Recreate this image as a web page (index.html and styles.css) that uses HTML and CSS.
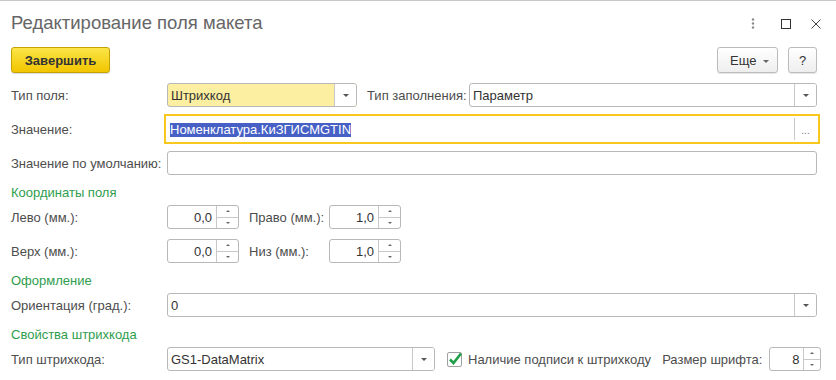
FILE: index.html
```html
<!doctype html>
<html>
<head>
<meta charset="utf-8">
<title>Редактирование поля макета</title>
<link rel="stylesheet" href="styles.css">
</head>
<body>
<div class="window">
  <div class="titlebar">
    <h1>Редактирование поля макета</h1>
    <div class="win-icons">
      <svg class="icon-more" width="4" height="11" viewBox="0 0 4 11"><circle cx="2" cy="1.5" r="1.2"/><circle cx="2" cy="5.5" r="1.2"/><circle cx="2" cy="9.5" r="1.2"/></svg>
      <svg class="icon-max" width="10" height="10" viewBox="0 0 10 10"><rect x="0.5" y="0.5" width="9" height="9"/></svg>
      <svg class="icon-close" width="10" height="10" viewBox="0 0 10 10"><path d="M0.5 0.5L9.5 9.5M9.5 0.5L0.5 9.5"/></svg>
    </div>
  </div>

  <div class="toolbar">
    <button class="btn-primary">Завершить</button>
    <div class="spacer"></div>
    <button class="btn btn-more">Еще <span class="tri"></span></button>
    <button class="btn btn-help">?</button>
  </div>

  <div class="form">
    <div class="row first">
      <div class="label">Тип поля:</div>
      <div class="field select w-type hl"><span class="text">Штрихкод</span><span class="drop"></span></div>
      <div class="label label-fill">Тип заполнения:</div>
      <div class="field select grow"><span class="text">Параметр</span><span class="drop"></span></div>
    </div>

    <div class="row">
      <div class="label">Значение:</div>
      <div class="focus-frame">
        <div class="field focused"><span class="text"><span class="sel">Номенклатура.КиЗГИСМGTIN</span></span><span class="dots">...</span></div>
      </div>
    </div>

    <div class="row">
      <div class="label">Значение по умолчанию:</div>
      <div class="field grow"><span class="text"></span></div>
    </div>

    <div class="heading">Координаты поля</div>

    <div class="row">
      <div class="label">Лево (мм.):</div>
      <div class="field spin"><span class="text">0,0</span><span class="arrows"><i class="up"></i><i class="down"></i></span></div>
      <div class="label label-pair">Право (мм.):</div>
      <div class="field spin"><span class="text">1,0</span><span class="arrows"><i class="up"></i><i class="down"></i></span></div>
    </div>

    <div class="row">
      <div class="label">Верх (мм.):</div>
      <div class="field spin"><span class="text">0,0</span><span class="arrows"><i class="up"></i><i class="down"></i></span></div>
      <div class="label label-pair">Низ (мм.):</div>
      <div class="field spin"><span class="text">1,0</span><span class="arrows"><i class="up"></i><i class="down"></i></span></div>
    </div>

    <div class="heading">Оформление</div>

    <div class="row">
      <div class="label">Ориентация (град.):</div>
      <div class="field select grow"><span class="text">0</span><span class="drop"></span></div>
    </div>

    <div class="heading">Свойства штрихкода</div>

    <div class="row">
      <div class="label">Тип штрихкода:</div>
      <div class="field select w-barcode"><span class="text">GS1-DataMatrix</span><span class="drop"></span></div>
      <label class="check">
        <span class="box"><svg width="16" height="16" viewBox="0 0 16 16"><path d="M3 8.5L6.5 12L14 2.5"/></svg></span>
        Наличие подписи к штрихкоду
      </label>
      <div class="label-inline">Размер шрифта:</div>
      <div class="field spin spin-small"><span class="text">8</span><span class="arrows"><i class="up"></i><i class="down"></i></span></div>
    </div>
  </div>
</div>
</body>
</html>
```

FILE: styles.css
```css
body {
    margin: 0;
    background: #fff;
    font-family: "Liberation Sans", Arial, sans-serif;
    font-size: 13px;
    color: #4d4d4d;
}
 .window {
    width: 836px;
    height: 380px;
    box-sizing: border-box;
    border-top: 1px solid #c8c8c8;
    overflow: hidden;
}

/* title */
 .titlebar {
    display: flex;
    align-items: flex-start;
    padding: 11px 0 0 11px;
    height: 35px;
    box-sizing: border-box;
}
 .titlebar h1 {
    flex: 1;
    margin: 0;
    font-size: 18.5px;
    font-weight: normal;
    line-height: 22px;
    color: #666;
}
 .win-icons {
    display: flex;
    align-items: center;
    height: 11px;
    margin-top: 6px;
    padding-right: 15px;
}
 .icon-more {
    fill: #8a8a8a;
    margin-right: 26px;
}
 .icon-max {
    fill: none;
    stroke: #333;
    margin-right: 20px;
}
 .icon-close {
    fill: none;
    stroke: #444;
}

/* toolbar */
 .toolbar {
    display: flex;
    margin-top: 11px;
    padding: 0 19px 0 11px;
    height: 26px;
}
 .spacer {
    flex: 1;
}
 button {
    font-family: inherit;
    font-size: 13px;
    height: 26px;
    box-sizing: border-box;
    border-radius: 3px;
    cursor: pointer;
    color: #333;
}
 .btn-primary {
    width: 99px;
    border: 1px solid #c4a300;
    background: linear-gradient(#fbe547, #f2c500);
    font-weight: bold;
    box-shadow: 0 1px 1px rgba(0,0,0,0.15);
}
 .btn {
    border: 1px solid #bcbcbc;
    background: linear-gradient(#ffffff, #eeeeee);
    box-shadow: 0 1px 1px rgba(0,0,0,0.1);
}
 .btn-more {
    width: 61px;
    padding: 0 0 0 4px;
}
 .btn-more .tri {
    display: inline-block;
    vertical-align: middle;
    margin-left: 3px;
    border-left: 3px solid transparent;
    border-right: 3px solid transparent;
    border-top: 3px solid #666;
}
 .btn-help {
    width: 29px;
    margin-left: 10px;
    padding: 0;
}

/* form */
 .form {
    margin-top: 10px;
    padding: 0 19px 0 11px;
}
 .row {
    display: flex;
    align-items: center;
    height: 24px;
    margin-top: 10px;
}
 .row.first {
    margin-top: 0;
}
 .heading + .row {
    margin-top: 2px;
}
 .label {
    width: 156px;
    flex: none;
    white-space: nowrap;
}
 .label-fill {
    width: 102px;
    margin-left: 10px;
}
 .label-pair {
    width: 80px;
    margin-left: 10px;
}
 .heading {
    height: 20px;
    line-height: 20px;
    margin-top: 8px;
    color: #2f9d4e;
}

 .field {
    display: flex;
    align-items: center;
    height: 24px;
    box-sizing: border-box;
    border: 1px solid #b8b8b8;
    border-radius: 3px;
    background: #fff;
    color: #333;
    flex: none;
}
 .field .text {
    flex: 1;
    padding-left: 3px;
    white-space: nowrap;
    overflow: hidden;
}
 .grow {
    flex: 1;
}
 .hl {
    background: #fcefa1;
}
 .w-type {
    width: 190px;
}
 .w-barcode {
    width: 268px;
}
 .drop {
    width: 21px;
    height: 100%;
    border-left: 1px solid #c8c8c8;
    border-radius: 0 2px 2px 0;
    background: #fff;
    display: flex;
    align-items: center;
    justify-content: center;
}
 .drop::after {
    content: "";
    border-left: 3px solid transparent;
    border-right: 3px solid transparent;
    border-top: 3px solid #555;
}

/* focused value field */
 .focus-frame {
    flex: 1;
    margin: -3px;
    padding: 1px;
    border: 2px solid #f8c81f;
}
 .field.focused {
    border-color: #fff;
}
 .field.focused .text {
    padding-left: 2px;
}
 .sel {
    background: #4660c6;
    color: #fff;
    line-height: 14px;
    display: inline-block;
}
 .dots {
    width: 21px;
    height: 22px;
    border-left: 1px solid #c8c8c8;
    text-align: center;
    font-size: 10px;
    line-height: 26px;
    color: #777;
}

/* spinners */
 .spin {
    width: 72px;
}
 .spin .text {
    text-align: right;
    padding-right: 4px;
}
 .arrows {
    width: 21px;
    height: 100%;
    border-left: 1px solid #c8c8c8;
    display: flex;
    flex-direction: column;
}
 .arrows i {
    flex: 1;
    display: flex;
    align-items: center;
    justify-content: center;
}
 .arrows .up {
    border-bottom: 1px solid #c8c8c8;
}
 .arrows .up::after {
    content: "";
    border-left: 2px solid transparent;
    border-right: 2px solid transparent;
    border-bottom: 2px solid #666;
}
 .arrows .down::after {
    content: "";
    border-left: 2px solid transparent;
    border-right: 2px solid transparent;
    border-top: 2px solid #666;
}
 .spin-small {
    width: 52px;
}
 .spin-small .arrows {
    width: 16px;
}

/* checkbox */
 .check {
    display: flex;
    align-items: center;
    margin-left: 12px;
    white-space: nowrap;
}
 .check .box {
    position: relative;
    width: 15px;
    height: 15px;
    box-sizing: border-box;
    border: 1px solid #a0a0a0;
    border-radius: 2px;
    margin-right: 6px;
}
 .check svg {
    position: absolute;
    left: -1px;
    top: -2px;
    fill: none;
    stroke: #1e9e47;
    stroke-width: 2.6;
}
 .label-inline {
    margin-left: 11px;
    margin-right: 7px;
    white-space: nowrap;
}
```
